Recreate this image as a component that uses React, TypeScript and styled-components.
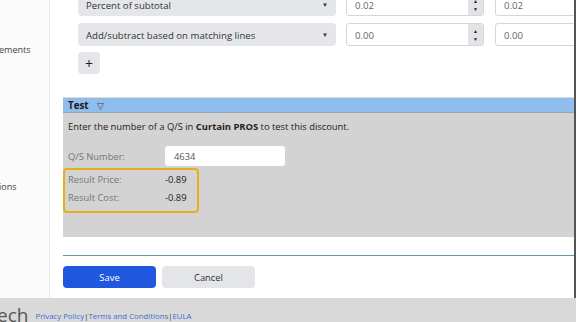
import React from "react";
import styled, { createGlobalStyle } from "styled-components";

const Global = createGlobalStyle`
  html, body { margin: 0; padding: 0; overflow: hidden; background: #fff; }
  body { font-family: "Open Sans", "Liberation Sans", sans-serif; color: #333; }
  * { box-sizing: border-box; }
`;

const Page = styled.div`
  width: 576px;
  height: 322px;
  display: flex;
  flex-direction: column;
  overflow: hidden;
`;

const Body = styled.div`
  flex: 1;
  display: flex;
  min-height: 0;
`;

const Sidebar = styled.div`
  width: 50px;
  flex: none;
  background: #fbfbfb;
  border-right: 1px solid #ececec;
  display: flex;
  flex-direction: column;
  overflow: hidden;
  font-size: 9px;
  color: #444;
`;

const SideItem = styled.div<{ $top: number }>`
  margin-top: ${(p) => p.$top}px;
  margin-left: -1px;
  white-space: nowrap;
  line-height: 12px;
`;

const Main = styled.div`
  flex: 1;
  min-width: 0;
  padding-left: 13px;
  display: flex;
  flex-direction: column;
  overflow: hidden;
  border-right: 2px solid #555;
`;

const Rules = styled.div`
  padding-left: 15px;
  margin-top: -7px;
  display: flex;
  flex-direction: column;
  gap: 7px;
`;

const Row = styled.div`
  display: flex;
  align-items: center;
  gap: 10px;
  height: 23px;
  overflow: hidden;
`;

const Select = styled.div`
  width: 258px;
  flex: none;
  height: 23px;
  border-radius: 4px;
  background: #e4e6ea;
  display: flex;
  align-items: center;
  justify-content: space-between;
  padding: 1px 8px 0 8px;
  font-size: 9.6px;
  color: #333;
`;

const Caret = styled.span`
  font-size: 6px;
  color: #333;
`;

const NumberBox = styled.div<{ $w: number; $shift?: number }>`
  width: ${(p) => p.$w}px;
  flex: none;
  margin-left: ${(p) => p.$shift || 0}px;
  height: 23px;
  border: 1px solid #d6d6d6;
  border-radius: 3px;
  background: #fff;
  display: flex;
  align-items: stretch;
  font-size: 9.6px;
  color: #666;
`;

const NumberValue = styled.span`
  flex: 1;
  display: flex;
  align-items: center;
  padding: 1px 0 0 8px;
`;

const Spinner = styled.span`
  width: 15px;
  background: #e2e3e6;
  border-radius: 0 3px 3px 0;
  display: flex;
  flex-direction: column;
  align-items: center;
  justify-content: center;
  font-size: 5px;
  line-height: 8px;
  color: #222;
`;

const PlusButton = styled.div`
  width: 22px;
  height: 22px;
  border-radius: 4px;
  background: #e4e6ea;
  display: flex;
  align-items: center;
  justify-content: center;
  font-size: 14px;
  color: #222;
  margin-top: -1px;
`;

const TestSection = styled.div`
  margin-top: 23px;
  border-top: 1px solid #dcdcdc;
`;

const TestHeader = styled.div`
  height: 15px;
  background: #8fbdee;
  display: flex;
  align-items: center;
  padding-left: 5px;
  gap: 8px;
  font-size: 9.8px;
  font-weight: 700;
  color: #1a1a1a;
  border-bottom: 1px solid #9aa4ae;
`;

const HeaderCaret = styled.span`
  font-size: 9px;
  font-weight: 400;
  color: #444;
`;

const Panel = styled.div`
  background: #d3d3d3;
  height: 124px;
  padding: 8px 0 0 5px;
  font-size: 9.4px;
  color: #222;
`;

const Intro = styled.div`
  line-height: 12px;
  b { font-weight: 700; }
`;

const FieldRow = styled.div`
  display: flex;
  align-items: center;
  margin-top: 13px;
  height: 20px;
`;

const Label = styled.span`
  width: 97px;
  color: #777;
`;

const TextInput = styled.div`
  width: 120px;
  height: 20px;
  background: #fff;
  border-radius: 3px;
  display: flex;
  align-items: center;
  padding-left: 9px;
  color: #555;
`;

const ResultBox = styled.div`
  margin-left: -5px;
  margin-top: 2px;
  width: 136px;
  height: 45px;
  border: 2px solid #e6ad1d;
  border-radius: 4px;
  padding: 4px 0 0 3px;
  display: flex;
  flex-direction: column;
  gap: 6px;
`;

const ResultRow = styled.div`
  display: flex;
  line-height: 12px;
`;

const ResultValue = styled.span`
  color: #222;
`;

const Divider = styled.div`
  margin-top: 18px;
  height: 1px;
  background: #6f93a4;
`;

const Actions = styled.div`
  display: flex;
  gap: 6px;
  margin-top: 10px;
`;

const Button = styled.div<{ $primary?: boolean }>`
  width: 93px;
  height: 22px;
  border-radius: 4px;
  display: flex;
  align-items: center;
  justify-content: center;
  font-size: 9.4px;
  background: ${(p) => (p.$primary ? "#1f58df" : "#e4e5e9")};
  color: ${(p) => (p.$primary ? "#fff" : "#333")};
`;

const Footer = styled.div`
  height: 24px;
  flex: none;
  background: #d9d9d9;
  display: flex;
  align-items: flex-end;
  gap: 7px;
  overflow: hidden;
`;

const Brand = styled.span`
  font-size: 19px;
  line-height: 20px;
  color: #555;
  margin-left: -3px;
  margin-bottom: -3px;
`;

const Links = styled.div`
  font-size: 7.8px;
  color: #3b6fd6;
  margin-bottom: 1px;
  line-height: 10px;
  span { color: #333; }
`;

export default function App() {
  return (
    <>
      <Global />
      <Page>
        <Body>
          <Sidebar>
            <SideItem $top={44}>ements</SideItem>
            <SideItem $top={125}>ions</SideItem>
          </Sidebar>
          <Main>
            <Rules>
              <Row>
                <Select>
                  Percent of subtotal<Caret>▼</Caret>
                </Select>
                <NumberBox $w={138}>
                  <NumberValue>0.02</NumberValue>
                  <Spinner>▲<br />▼</Spinner>
                </NumberBox>
                <NumberBox $w={90} $shift={1}>
                  <NumberValue>0.02</NumberValue>
                </NumberBox>
              </Row>
              <Row>
                <Select>
                  Add/subtract based on matching lines<Caret>▼</Caret>
                </Select>
                <NumberBox $w={138}>
                  <NumberValue>0.00</NumberValue>
                  <Spinner>▲<br />▼</Spinner>
                </NumberBox>
                <NumberBox $w={90} $shift={1}>
                  <NumberValue>0.00</NumberValue>
                </NumberBox>
              </Row>
              <PlusButton>+</PlusButton>
            </Rules>
            <TestSection>
              <TestHeader>
                Test<HeaderCaret>▽</HeaderCaret>
              </TestHeader>
              <Panel>
                <Intro>
                  Enter the number of a Q/S in <b>Curtain PROS</b> to test this discount.
                </Intro>
                <FieldRow>
                  <Label>Q/S Number:</Label>
                  <TextInput>4634</TextInput>
                </FieldRow>
                <ResultBox>
                  <ResultRow>
                    <Label>Result Price:</Label>
                    <ResultValue>-0.89</ResultValue>
                  </ResultRow>
                  <ResultRow>
                    <Label>Result Cost:</Label>
                    <ResultValue>-0.89</ResultValue>
                  </ResultRow>
                </ResultBox>
              </Panel>
            </TestSection>
            <Divider />
            <Actions>
              <Button $primary>Save</Button>
              <Button>Cancel</Button>
            </Actions>
          </Main>
        </Body>
        <Footer>
          <Brand>ech</Brand>
          <Links>
            Privacy Policy<span>|</span>Terms and Conditions<span>|</span>EULA
          </Links>
        </Footer>
      </Page>
    </>
  );
}
